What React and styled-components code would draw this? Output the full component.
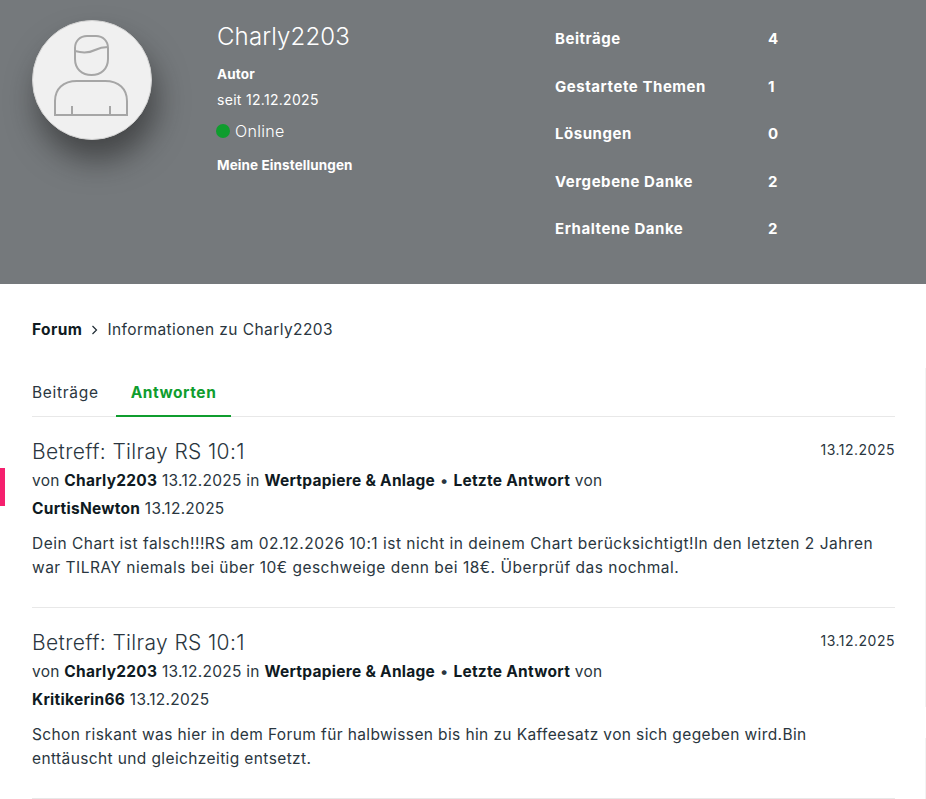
import React from "react";
import styled, { createGlobalStyle } from "styled-components";

const Global = createGlobalStyle`
  html, body { margin: 0; padding: 0; background: #fff; }
  body { font-family: Inter, "Open Sans", sans-serif; color: #2a3640; overflow: hidden; height: 799px; }
`;
const Page = styled.div`position: relative; width: 926px; height: 799px; overflow: hidden;`;
const Hero = styled.header`
  height: 284px; background: #75797c; color: #fff; box-sizing: border-box;
  display: flex; padding: 20px 0 0 32px;
`;
const Avatar = styled.div`
  width: 120px; height: 120px; border-radius: 50%; background: #f0f0f0; border: 1px solid #d2d2d2;
  box-sizing: border-box; display: flex; align-items: center; justify-content: center;
  box-shadow: 5px 20px 30px rgba(30,30,30,.55); flex: none;
`;
const Identity = styled.div`
  margin-left: 65px; width: 338px; flex: none; display: flex; flex-direction: column; align-items: flex-start;
`;
const Name = styled.h1`margin: 0; font-size: 24px; line-height: 33px; font-weight: 300; letter-spacing: .15px;`;
const Rank = styled.div`margin-top: 12px; font-size: 13.5px; line-height: 18px; font-weight: 700; letter-spacing: .15px;`;
const Since = styled.div`margin-top: 8px; font-size: 14px; line-height: 18px; font-weight: 400; letter-spacing: .3px;`;
const Status = styled.div`margin: 12px 0 0 -1px; display: flex; align-items: center; gap: 5px; font-size: 16px; line-height: 20px; font-weight: 300; letter-spacing: .3px;`;
const Dot = styled.span`width: 14px; height: 14px; border-radius: 50%; background: #0f9d2e;`;
const Settings = styled.div`margin-top: 15px; font-size: 13.5px; line-height: 18px; font-weight: 700; letter-spacing: .1px;`;
const Stats = styled.dl`margin: 9px 0 0; display: grid; grid-template-columns: 213px auto; grid-auto-rows: 47.5px; align-items: start;`;
const StatLabel = styled.dt`font-size: 15px; line-height: 20px; font-weight: 700; margin: 0; letter-spacing: .55px;`;
const StatValue = styled.dd`font-size: 15px; line-height: 20px; font-weight: 700; margin: 0;`;
const Main = styled.main`padding: 35px 31px 0 32px;`;
const Crumbs = styled.nav`display: flex; align-items: center; font-size: 15.5px; line-height: 22px; font-weight: 400; letter-spacing: .42px;`;
const CrumbLink = styled.b`font-weight: 700; color: #0f1a22;`;
const CrumbSep = styled.span`margin: 0 9px; display: flex;`;
const Tabs = styled.div`margin-top: 32px; height: 43px; border-bottom: 1px solid #e8e8e8; display: flex;`;
const Tab = styled.div`
  box-sizing: border-box; height: 44px; padding: 9px 15px 0; font-size: 15.5px; line-height: 22px;
  letter-spacing: ${p => (p.$active ? ".55px" : ".7px")};
  font-weight: ${p => (p.$active ? 700 : 400)};
  color: ${p => (p.$active ? "#0f9d2e" : "inherit")};
  border-bottom: 2px solid ${p => (p.$active ? "#0f9d2e" : "transparent")};
  &:first-child { padding-left: 0; padding-right: 17px; }
`;
const Item = styled.article`height: 191px; box-sizing: border-box; padding-top: 21px; border-bottom: 1px solid #e8e8e8;`;
const ItemHead = styled.div`display: flex; justify-content: space-between; align-items: flex-start;`;
const Title = styled.h2`margin: 0; font-size: 21px; line-height: 27px; font-weight: 300; letter-spacing: .36px;`;
const ItemDate = styled.time`font-size: 14px; line-height: 24px; letter-spacing: .5px;`;
const Meta = styled.div`margin-top: 2px; font-size: 15.5px; line-height: 27.5px; width: 600px; letter-spacing: .27px;`;
const Strong = styled.b`font-weight: 700; color: #0f1a22;`;
const Body = styled.p`margin: 10px 0 0; font-size: 15.5px; line-height: 24px; letter-spacing: ${p => p.$track}px; max-width: ${p => p.$measure}px;`;
const PinkMark = styled.div`position: absolute; left: 0; top: 468px; width: 5px; height: 38px; background: #f5206e;`;
const Edge = styled.div`position: absolute; right: 0; width: 1px; background: #f3f3f3;`;

const posts = [
  { user: "CurtisNewton", track: 0.49, measure: 863, text: "Dein Chart ist falsch!!!RS am 02.12.2026 10:1 ist nicht in deinem Chart berücksichtigt!In den letzten 2 Jahren war TILRAY niemals bei über 10€ geschweige denn bei 18€. Überprüf das nochmal." },
  { user: "Kritikerin66", track: 0.385, measure: 800, text: "Schon riskant was hier in dem Forum für halbwissen bis hin zu Kaffeesatz von sich gegeben wird.Bin enttäuscht und gleichzeitig entsetzt." },
];
const stats = [["Beiträge", 4], ["Gestartete Themen", 1], ["Lösungen", 0], ["Vergebene Danke", 2], ["Erhaltene Danke", 2]];

export default function App() {
  return (
    <Page>
      <Global />
      <Hero>
        <Avatar>
          <svg width="118" height="118" viewBox="1 1 118 118" fill="none" stroke="#a6a6a6" strokeWidth="2">
            <path d="M43 28c0-7 5-12 12-12h9c7 0 12 5 12 12v11c0 10-7 16-16.500 16S43 49 43 39z" />
            <path d="M43 31c7 2 14 2 20-1 4-2 8-3 13-3" />
            <path d="M23 95V81c0-12 8-20 22-20h28c14 0 22 8 22 20v14z" />
            <path d="M40 95v-9M78 95v-9" />
          </svg>
        </Avatar>
        <Identity>
          <Name>Charly2203</Name>
          <Rank>Autor</Rank>
          <Since>seit 12.12.2025</Since>
          <Status><Dot />Online</Status>
          <Settings>Meine Einstellungen</Settings>
        </Identity>
        <Stats>
          {stats.map(([l, v]) => (
            <React.Fragment key={l}>
              <StatLabel>{l}</StatLabel>
              <StatValue>{v}</StatValue>
            </React.Fragment>
          ))}
        </Stats>
      </Hero>
      <Main>
        <Crumbs>
          <CrumbLink>Forum</CrumbLink>
          <CrumbSep>
            <svg width="7" height="10" viewBox="0 0 7 10" fill="none" stroke="#1e2a33" strokeWidth="1.2"><path d="M1.500 1l4 4-4 4" /></svg>
          </CrumbSep>
          Informationen zu Charly2203
        </Crumbs>
        <Tabs>
          <Tab>Beiträge</Tab>
          <Tab $active>Antworten</Tab>
        </Tabs>
        {posts.map(p => (
          <Item key={p.user}>
            <ItemHead>
              <Title>Betreff: Tilray RS 10:1</Title>
              <ItemDate>13.12.2025</ItemDate>
            </ItemHead>
            <Meta>
              von <Strong>Charly2203</Strong> 13.12.2025 in <Strong>Wertpapiere &amp; Anlage</Strong> • <Strong>Letzte Antwort</Strong> von <Strong>{p.user}</Strong> 13.12.2025
            </Meta>
            <Body $track={p.track} $measure={p.measure}>{p.text}</Body>
          </Item>
        ))}
      </Main>
      <PinkMark />
      <Edge style={{ top: 368, height: 339 }} />
      <Edge style={{ top: 738, height: 61 }} />
    </Page>
  );
}
